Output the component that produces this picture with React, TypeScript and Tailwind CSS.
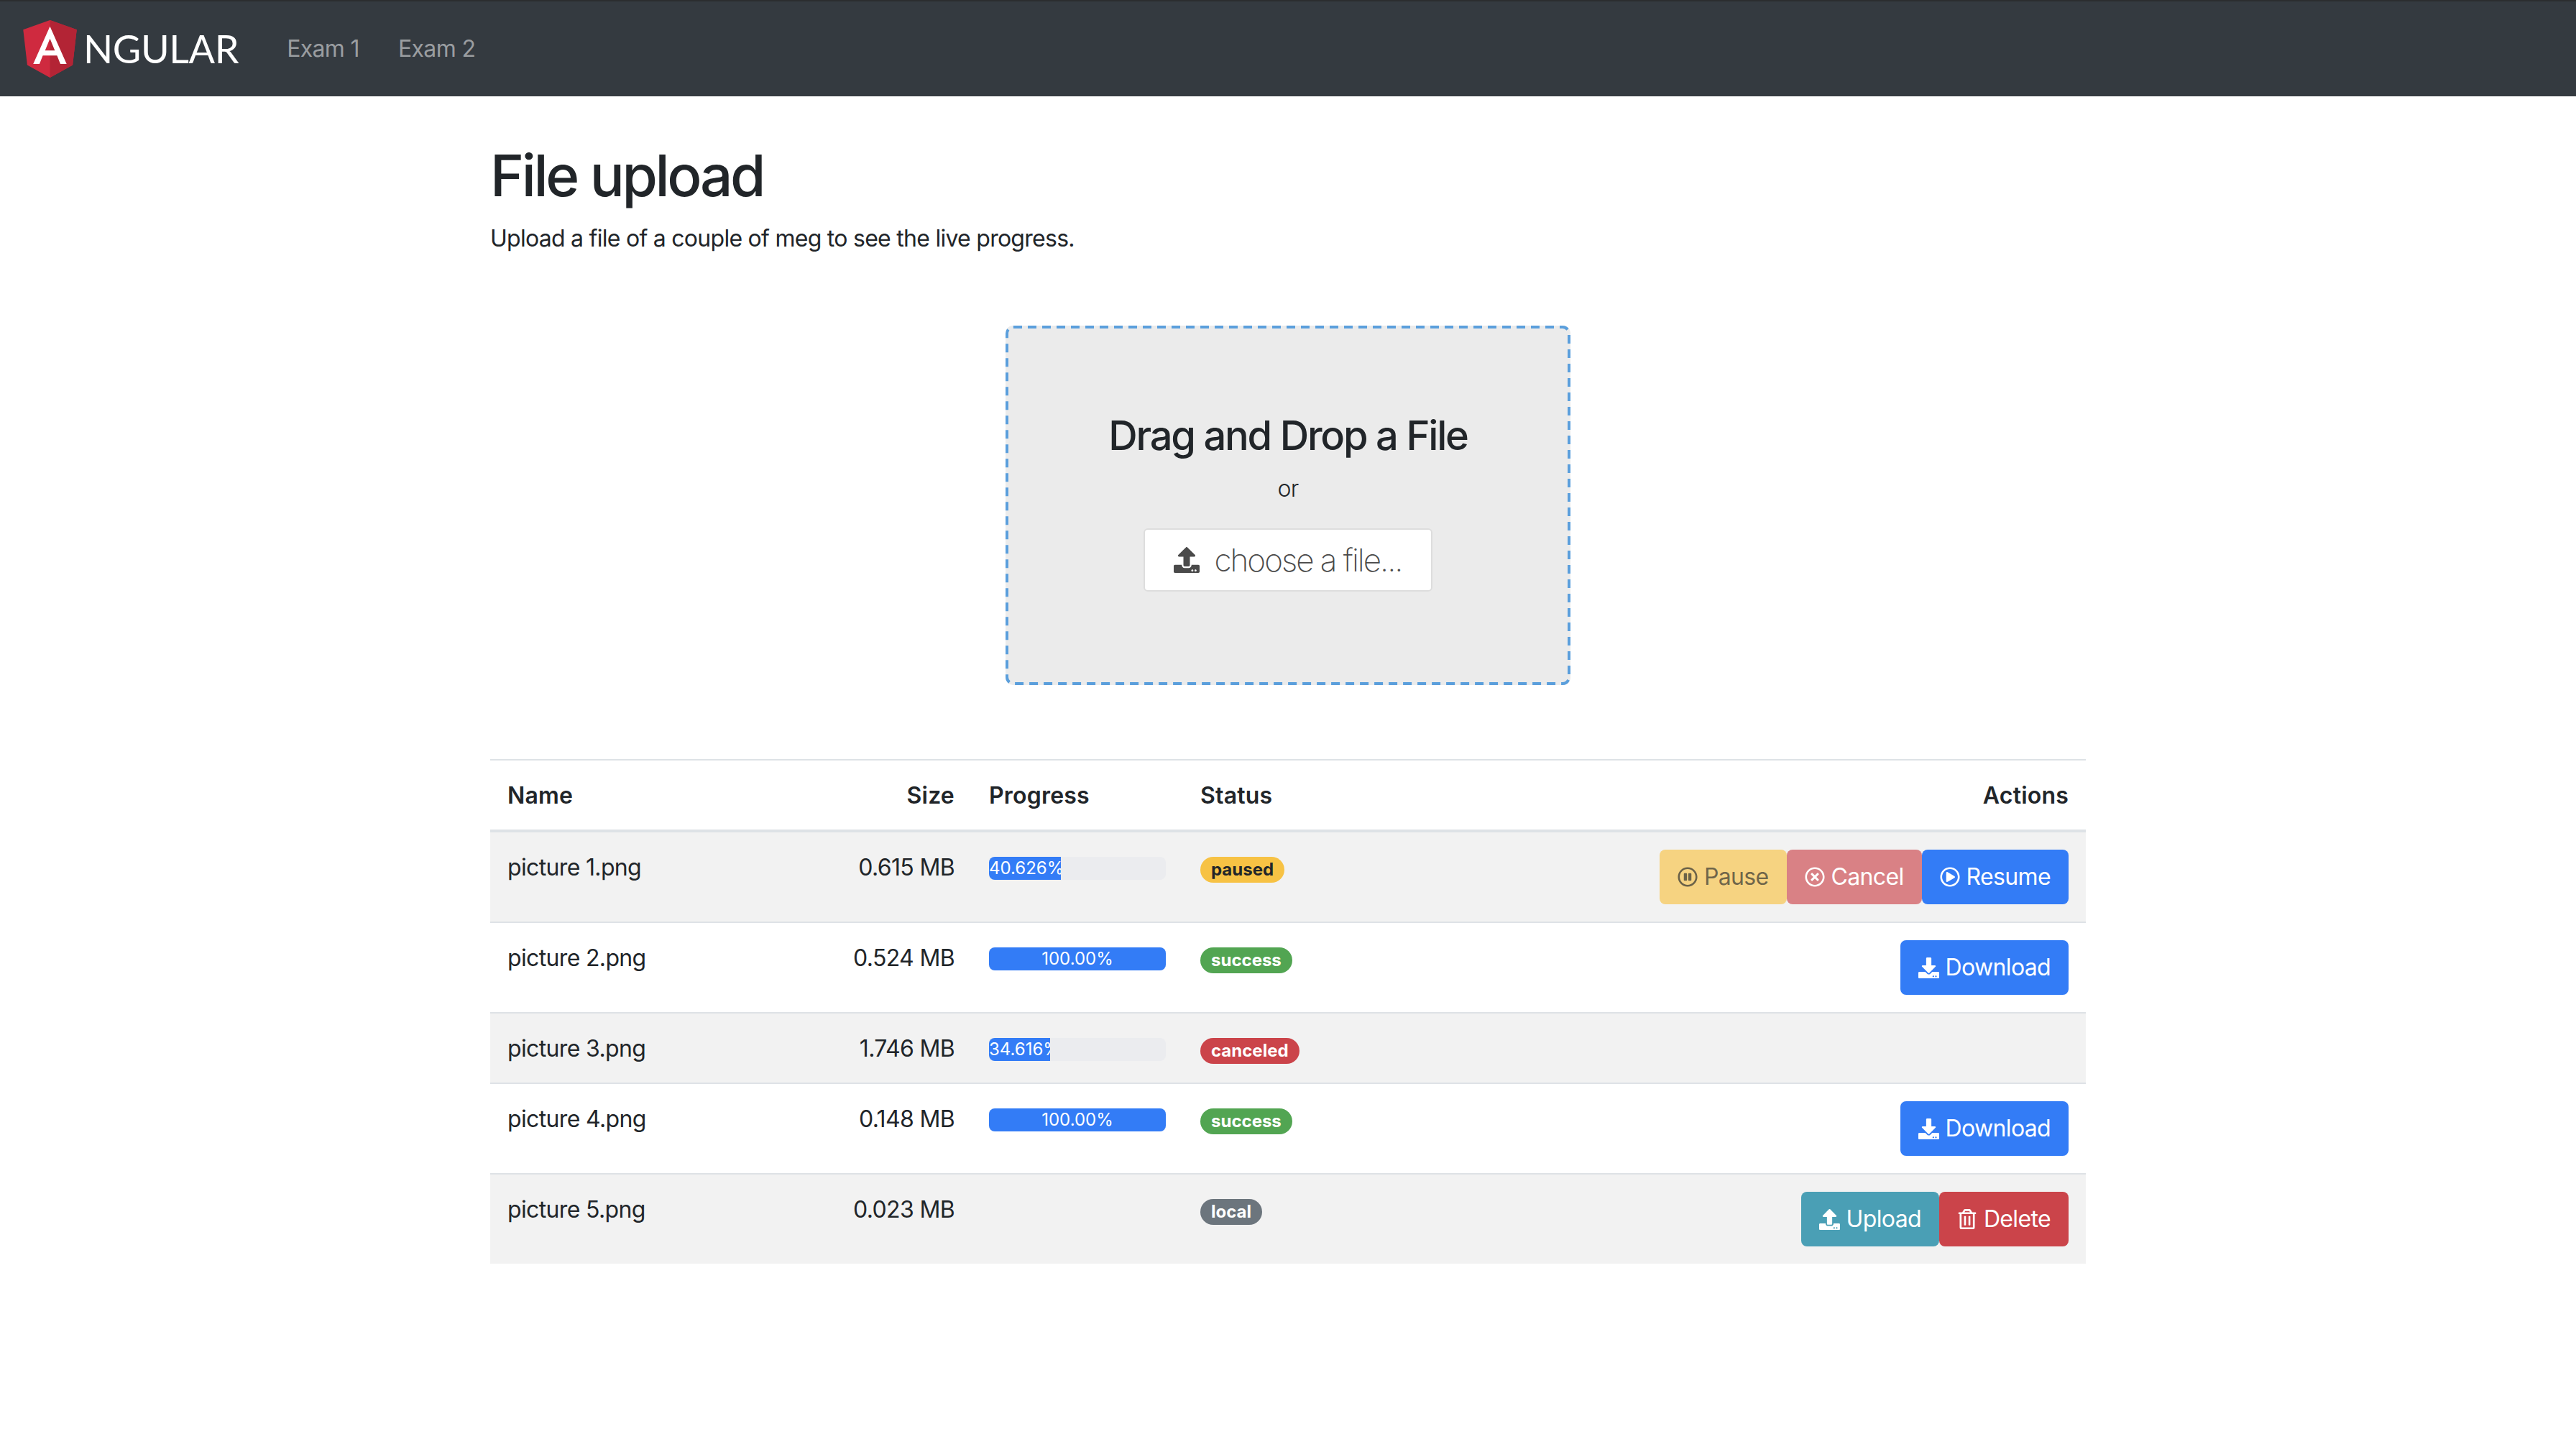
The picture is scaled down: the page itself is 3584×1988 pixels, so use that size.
import React from 'react';
import { FaUpload, FaDownload, FaRegPauseCircle, FaRegTimesCircle, FaRegPlayCircle, FaRegTrashAlt } from 'react-icons/fa';

type Status = 'paused' | 'success' | 'canceled' | 'local';

interface FileRow {
  name: string;
  size: string;
  progress?: number;
  label?: string;
  status: Status;
}

const files: FileRow[] = [
  { name: 'picture 1.png', size: '0.615 MB', progress: 40.626, label: '40.626%', status: 'paused' },
  { name: 'picture 2.png', size: '0.524 MB', progress: 100, label: '100.00%', status: 'success' },
  { name: 'picture 3.png', size: '1.746 MB', progress: 34.616, label: '34.616%', status: 'canceled' },
  { name: 'picture 4.png', size: '0.148 MB', progress: 100, label: '100.00%', status: 'success' },
  { name: 'picture 5.png', size: '0.023 MB', status: 'local' },
];

const badgeClass: Record<Status, string> = {
  paused: 'bg-[#f7c244] text-[#212529]',
  success: 'bg-[#52a552] text-white',
  canceled: 'bg-[#cb444a] text-white',
  local: 'bg-[#6c757d] text-white',
};

const Logo = () => (
  <div className="flex items-center">
    <svg viewBox="31.9 30 186.2 200" className="w-[75px] h-[80px] shrink-0">
      <polygon fill="#cf2a3f" points="125,30 31.9,63.2 46.1,186.3 125,230 203.9,186.3 218.1,63.2" />
      <polygon fill="#b32435" points="125,30 125,230 203.9,186.3 218.1,63.2" />
      <path
        fill="#fff"
        d="M125,52.1L66.8,182.6h21.7l11.7-29.2h49.4l11.7,29.2h21.7L125,52.1z M142,135.4H108l17-40.9L142,135.4z"
      />
    </svg>
    <span className="ml-[9px] font-[Lato,sans-serif] font-normal text-[54px] leading-none text-white tracking-[-0.4px]">NGULAR</span>
  </div>
);

const Btn = ({ color, icon, children }: { color: string; icon: React.ReactNode; children: React.ReactNode }) => (
  <button className={`flex items-center gap-[9px] h-[76px] px-[25px] rounded-[8px] text-[32px] leading-[48px] tracking-[-0.65px] ${color}`}>
    {icon}
    {children}
  </button>
);

const Actions = ({ status }: { status: Status }) => {
  if (status === 'paused') {
    return (
      <>
        <Btn color="bg-[#f7c244]/65 text-[#212529]/65" icon={<FaRegPauseCircle className="text-[28px]" />}>Pause</Btn>
        <Btn color="bg-[#cb444a]/65 text-white" icon={<FaRegTimesCircle className="text-[28px]" />}>Cancel</Btn>
        <Btn color="bg-[#337cf6] text-white" icon={<FaRegPlayCircle className="text-[28px]" />}>Resume</Btn>
      </>
    );
  }
  if (status === 'success') {
    return <Btn color="bg-[#337cf6] text-white" icon={<FaDownload className="text-[29px]" />}>Download</Btn>;
  }
  if (status === 'local') {
    return (
      <>
        <Btn color="bg-[#4a9fb5] text-white" icon={<FaUpload className="text-[29px]" />}>Upload</Btn>
        <Btn color="bg-[#cb444a] text-white" icon={<FaRegTrashAlt className="text-[28px]" />}>Delete</Btn>
      </>
    );
  }
  return null;
};

export default function App() {
  return (
    <div className="min-h-[1988px] bg-white font-[Inter,sans-serif] text-[32px] leading-[48px] tracking-[-0.65px] text-[#212529]">
      <nav className="flex items-center h-[134px] pl-[32px] bg-[#343a40] border-t-[2px] border-[#2b2d2f]">
        <Logo />
        <a className="ml-[67px] text-[#9a9da0]">Exam 1</a>
        <a className="ml-[54px] text-[#9a9da0]">Exam 2</a>
      </nav>

      <main className="w-[2220px] mx-auto pt-[62px]">
        <h1 className="text-[80px] leading-[96px] font-medium tracking-[-3.4px] mb-[16px]">File upload</h1>
        <p className="tracking-[-0.73px]">Upload a file of a couple of meg to see the live progress.</p>

        <div className="relative flex flex-col items-center w-[786px] h-[500px] mx-auto mt-[97px] pt-[120px] bg-[#ebebeb] rounded-[10px]">
          <svg className="absolute inset-0 w-full h-full" viewBox="0 0 786 500" fill="none">
            <rect x="2" y="2" width="782" height="496" rx="9" stroke="#5b9fdc" strokeWidth="4" strokeDasharray="12 8" />
          </svg>
          <h3 className="text-[56px] leading-[67px] font-medium tracking-[-2.2px]">Drag and Drop a File</h3>
          <div className="mt-[16px] font-light">or</div>
          <label className="flex items-center justify-center gap-[20px] w-[402px] h-[88px] mt-[31px] bg-white border-[2px] border-[#dddddd] rounded-[6px] text-[44px] font-extralight tracking-[-2px] text-[#4a4a4a]">
            <FaUpload className="text-[36px]" />
            choose a file...
          </label>
        </div>

        <table className="w-full mt-[103px] table-fixed border-collapse">
          <colgroup>
            <col className="w-[460px]" />
            <col className="w-[210px]" />
            <col className="w-[294px]" />
            <col className="w-[300px]" />
            <col />
          </colgroup>
          <thead>
            <tr className="border-t-[2px] border-b-[4px] border-[#dee2e6] tracking-[0.2px]">
              <th className="px-[24px] pt-[25px] pb-[23px] text-left font-semibold">Name</th>
              <th className="px-[24px] pt-[25px] pb-[23px] text-right font-semibold">Size</th>
              <th className="px-[24px] pt-[25px] pb-[23px] text-left font-semibold">Progress</th>
              <th className="px-[24px] pt-[25px] pb-[23px] text-left font-semibold">Status</th>
              <th className="px-[24px] pt-[25px] pb-[23px] text-right font-semibold">Actions</th>
            </tr>
          </thead>
          <tbody>
            {files.map((f, i) => (
              <tr key={f.name} className={`border-t-[2px] border-[#dee2e6] ${i % 2 === 0 ? 'bg-[#f2f2f2]' : 'bg-white'}`}>
                <td className="px-[24px] pt-[25px] pb-[23px] align-top">{f.name}</td>
                <td className="px-[24px] pt-[25px] pb-[23px] align-top text-right">{f.size}</td>
                <td className="p-[24px] align-top">
                  {f.progress !== undefined && (
                    <div className="flex h-[32px] mt-[10px] rounded-[8px] overflow-hidden bg-[#ebecef] text-[24px] leading-[32px] tracking-normal text-white">
                      <div className="bg-[#337cf6] text-center whitespace-nowrap overflow-hidden" style={{ width: `${f.progress}%` }}>
                        {f.label}
                      </div>
                    </div>
                  )}
                </td>
                <td className="p-[24px] align-top">
                  <span className={`inline-block mt-[10px] px-[15px] h-[36px] rounded-full text-[24px] leading-[36px] tracking-normal font-bold align-top ${badgeClass[f.status]}`}>
                    {f.status}
                  </span>
                </td>
                <td className="p-[24px] align-top">
                  <div className="flex justify-end">
                    <Actions status={f.status} />
                  </div>
                </td>
              </tr>
            ))}
          </tbody>
        </table>
      </main>
    </div>
  );
}
